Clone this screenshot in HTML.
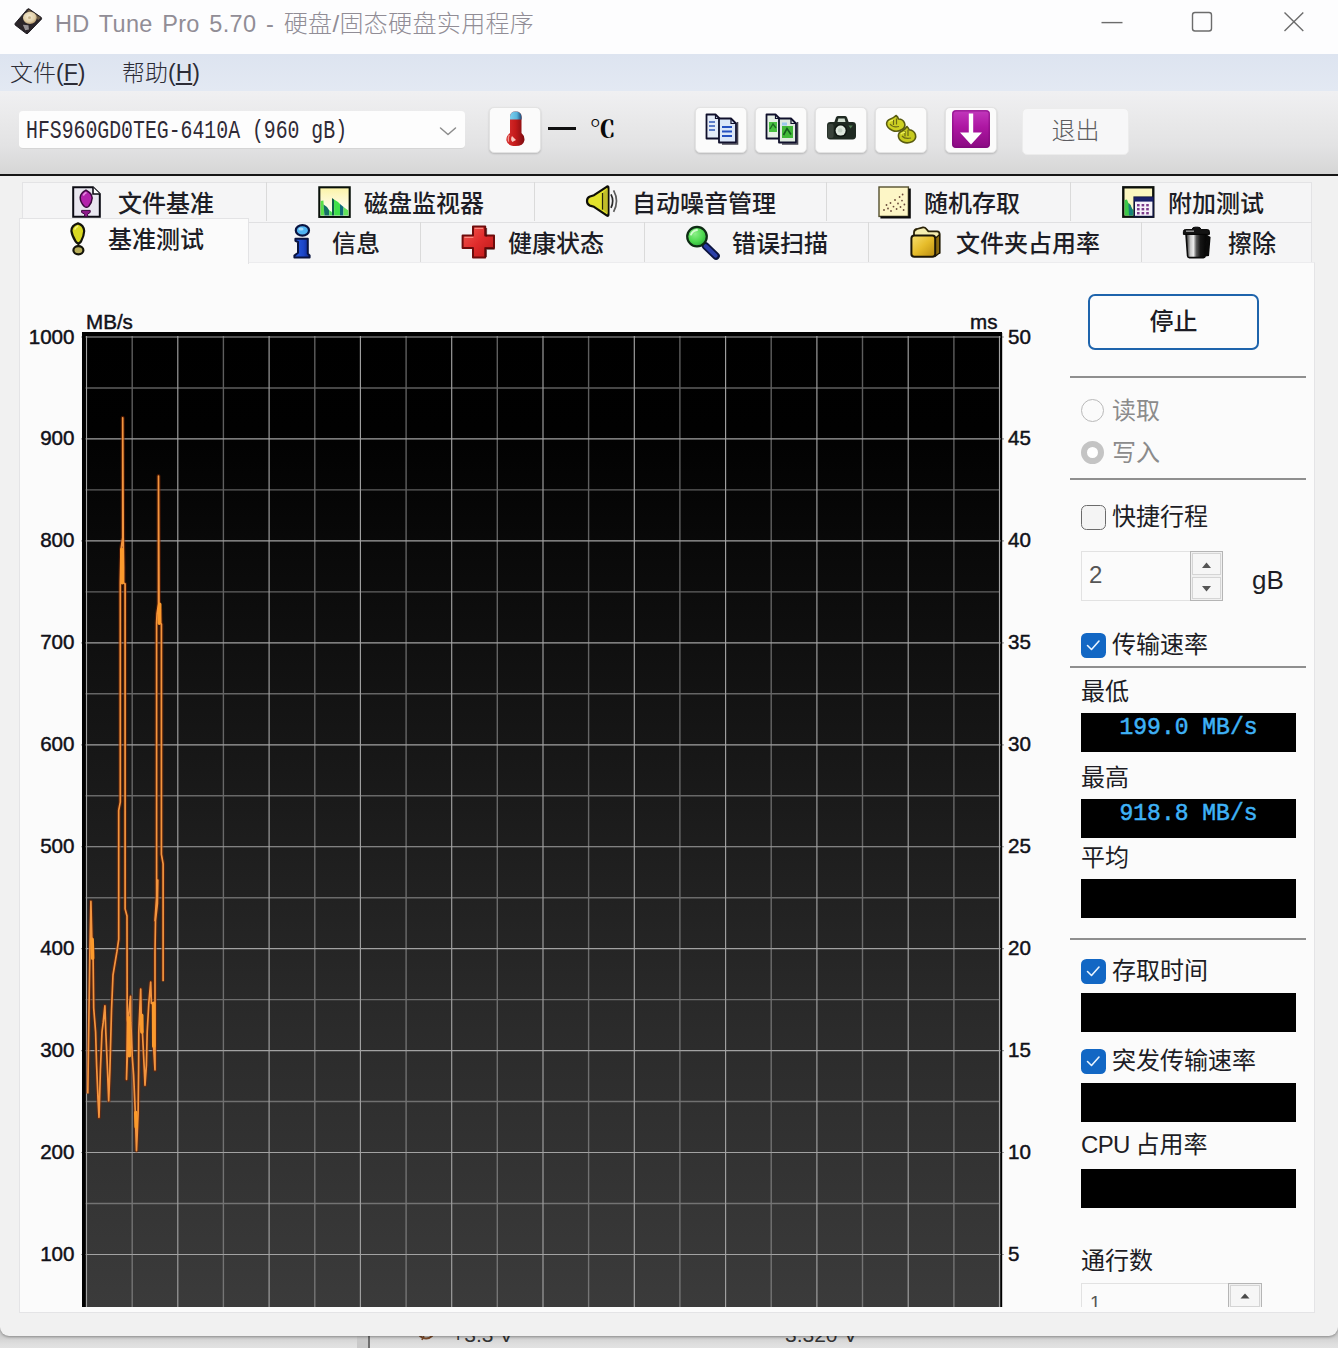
<!DOCTYPE html><html lang="zh-CN"><head><meta charset="utf-8"><title>HD Tune Pro 5.70</title><style>
*{box-sizing:border-box;margin:0;padding:0}
html,body{width:1338px;height:1348px;overflow:hidden;background:#d9d9d9}
body{position:relative;font-family:"Liberation Sans","Noto Sans CJK SC",sans-serif;color:#1b1b1f}
.abs{position:absolute}
#under{left:0;top:1300px;width:1338px;height:48px;background:linear-gradient(#cfcfcf 0,#cfcfcf 36px,#dedede 44px,#e2e2e2)}
#win{left:0;top:0;width:1338px;height:1336px;background:#f1f1f1;border-radius:0 0 9px 9px;overflow:hidden;box-shadow:0 1px 3px rgba(0,0,0,.35)}
#title{left:0;top:0;width:1338px;height:54px;background:#fdfdfe}
#title .t{left:55px;top:7.5px;font-size:24px;line-height:32px;color:#918d96;white-space:nowrap}
#title .t .l{font-size:23.5px;letter-spacing:.3px;word-spacing:2.8px}
#title .t .c{font-weight:300;letter-spacing:.35px}
#menu{left:0;top:54px;width:1338px;height:37px;background:linear-gradient(#dde4f0,#e3e9f3)}
#menu span{position:absolute;top:2.5px;font-size:23px;line-height:32px;color:#2c2c36;white-space:nowrap;font-weight:300}
#tool{left:0;top:91px;width:1338px;height:83px;background:linear-gradient(#f0f0f2,#e9e9ea 35%,#e3e3e4 65%,#d6d6d6)}
#toolline{left:0;top:174px;width:1338px;height:1.8px;background:#161616}
.tbtn{position:absolute;top:107px;width:52px;height:46px;background:#fbfbfb;border:1px solid #e3e3e3;border-radius:5px;box-shadow:0 1px 2px rgba(0,0,0,.18)}
#combo{left:19px;top:111px;width:446px;height:38px;background:#fdfdfd;border-radius:4px;border-bottom:1px solid #d5d5d5}
#combo .tx{left:7px;top:4.5px;font-family:"Liberation Mono","Noto Sans CJK SC",monospace;font-size:25.5px;line-height:32px;color:#2f2a36;white-space:nowrap;transform:scaleX(.777);transform-origin:0 0}
#exit{left:1022px;top:108px;width:107px;height:47px;background:#f7f7f8;border-radius:5px;border:1px solid #ececec;font-size:24px;line-height:44px;text-align:center;color:#5c5c60;font-weight:300}
.tab{position:absolute;font-size:24px;line-height:30px;font-weight:500;color:#1d1d25;white-space:nowrap}
.sep{position:absolute;width:1px;background:#dadada}
.lbl{position:absolute;font-size:24px;line-height:30px;color:#1d1d25;white-space:nowrap}
.hr{position:absolute;left:1070px;width:236px;height:1.3px;background:#8f8f8f;margin-top:.4px}
.blk{position:absolute;left:1081px;width:215px;height:39px;background:#000}
.blk span{position:absolute;left:0;width:215px;top:0px;text-align:center;font-family:"Liberation Mono",monospace;font-size:23px;line-height:30px;color:#3fb2f6;-webkit-text-stroke:.5px #3fb2f6;white-space:pre}
.cb{position:absolute;left:1080.5px;width:25px;height:25px;border-radius:5.5px;margin-top:-.5px}
.cb.on{background:#1267c4}
.cb.off{background:#f4f4f4;border:1.5px solid #6b6b6b}
.ax{position:absolute;font-size:20.6px;line-height:24px;color:#111118;white-space:nowrap;-webkit-text-stroke:.45px #111118}
</style></head><body>
<div id="under" class="abs"><div class="abs" style="left:357px;top:0;width:12px;height:48px;background:#c9c9c9"></div><div class="abs" style="left:368px;top:0;width:2px;height:48px;background:#6f6f6f"></div><div class="abs" style="left:452px;top:23px;font-size:21px;line-height:24px;color:#333;white-space:nowrap">+3.3 V</div><div class="abs" style="left:785px;top:23px;font-size:21px;line-height:24px;color:#333;white-space:nowrap">3.320 V</div><svg class="abs" style="left:414px;top:24px" width="24" height="24"><circle cx="12" cy="6" r="8.5" fill="none" stroke="#7a4a2a" stroke-width="1.8"/><path d="M8 16 L15 0" stroke="#7a4a2a" stroke-width="1.6"/></svg></div>
<div id="win" class="abs">
<div id="title" class="abs"><div class="t abs"><span class="l">HD Tune Pro 5.70 - </span><span class="c">硬盘/固态硬盘实用程序</span></div></div>
<div id="menu" class="abs"><span style="left:10px">文件(<u>F</u>)</span><span style="left:122px">帮助(<u>H</u>)</span></div>
<div id="tool" class="abs"></div><div id="toolline" class="abs"></div>
<div id="combo" class="abs"><div class="tx abs">HFS960GD0TEG-6410A (960 gB)</div></div>
<div class="tbtn" style="left:489px"></div>
<div class="tbtn" style="left:695px"></div>
<div class="tbtn" style="left:755px"></div>
<div class="tbtn" style="left:815px"></div>
<div class="tbtn" style="left:875px"></div>
<div class="tbtn" style="left:945px"></div>
<div id="exit" class="abs">退出</div>
<div class="abs" style="left:21.5px;top:182px;width:1290px;height:81px;background:#f5f5f6;border:1px solid #e3e3e5"></div>
<div class="abs" style="left:20px;top:221.5px;width:1292px;height:1px;background:#e0e0e2"></div>
<div class="sep" style="left:266px;top:182px;height:39px"></div>
<div class="sep" style="left:534px;top:182px;height:39px"></div>
<div class="sep" style="left:826px;top:182px;height:39px"></div>
<div class="sep" style="left:1070px;top:182px;height:39px"></div>
<div class="sep" style="left:420px;top:222px;height:40px"></div>
<div class="sep" style="left:644px;top:222px;height:40px"></div>
<div class="sep" style="left:868px;top:222px;height:40px"></div>
<div class="sep" style="left:1141px;top:222px;height:40px"></div>
<div class="abs" style="left:19px;top:262px;width:1296px;height:1051px;background:#fbfbfb;border:1px solid #e4e4e6;border-top:1px solid #ececee"></div>
<div class="abs" style="left:19px;top:218px;width:230px;height:46px;background:#fbfbfb;border:1px solid #e3e3e5;border-bottom:none"></div>
<div class="tab" style="left:118px;top:189px">文件基准</div>
<div class="tab" style="left:364px;top:189px">磁盘监视器</div>
<div class="tab" style="left:632px;top:189px">自动噪音管理</div>
<div class="tab" style="left:924px;top:189px">随机存取</div>
<div class="tab" style="left:1168px;top:189px">附加测试</div>
<div class="tab" style="left:108px;top:225px">基准测试</div>
<div class="tab" style="left:332px;top:229px">信息</div>
<div class="tab" style="left:508px;top:229px">健康状态</div>
<div class="tab" style="left:732px;top:229px">错误扫描</div>
<div class="tab" style="left:956px;top:229px">文件夹占用率</div>
<div class="tab" style="left:1228px;top:229px">擦除</div>
<svg class="abs" style="left:0;top:0" width="1338" height="1348" viewBox="0 0 1338 1348">
<defs><linearGradient id="cg" x1="0" y1="0" x2="0" y2="1"><stop offset="0" stop-color="#000"/><stop offset=".1" stop-color="#010101"/><stop offset=".45" stop-color="#181818"/><stop offset=".7" stop-color="#2a2a2a"/><stop offset="1" stop-color="#3b3b3b"/></linearGradient></defs>
<rect x="82" y="332" width="920" height="975" fill="url(#cg)"/>
<path d="M86.5 336 V1307 M177.8 336 V1307 M269.1 336 V1307 M360.4 336 V1307 M451.7 336 V1307 M543.0 336 V1307 M634.3 336 V1307 M725.6 336 V1307 M816.9 336 V1307 M908.2 336 V1307 M999.5 336 V1307 M81 337.0 H1004 M81 438.9 H1004 M81 540.9 H1004 M81 642.8 H1004 M81 744.8 H1004 M81 846.7 H1004 M81 948.6 H1004 M81 1050.6 H1004 M81 1152.5 H1004 M81 1254.5 H1004 " stroke="#a2a2a2" stroke-width="1.15" fill="none"/>
<path d="M132.2 336 V1307 M223.4 336 V1307 M314.8 336 V1307 M406.1 336 V1307 M497.3 336 V1307 M588.6 336 V1307 M679.9 336 V1307 M771.2 336 V1307 M862.5 336 V1307 M953.9 336 V1307 M85 388.0 H1000 M85 489.9 H1000 M85 591.9 H1000 M85 693.8 H1000 M85 795.7 H1000 M85 897.7 H1000 M85 999.6 H1000 M85 1101.5 H1000 M85 1203.5 H1000 " stroke="#9c9c9c" stroke-opacity=".6" stroke-width="1.4" fill="none"/>
<rect x="82" y="333" width="3.6" height="974" fill="#000"/>
<rect x="82" y="332" width="920" height="4" fill="#000"/>
<rect x="1000.6" y="333" width="1.6" height="974" fill="#000"/>
<path d="M87.8 1093.6 L88.5 1043.8 L89.9 951.2 L90.9 901.4 L91.8 937.0 L93.0 951.2 L93.7 1008.2 L95.6 1031.9 L96.6 1065.2 L98.0 1098.4 L99.0 1117.4 L100.4 1069.9 L102.0 1031.9 L103.2 1022.4 L104.9 1005.8 L105.8 1031.9 L107.5 1069.9 L108.7 1100.8 L109.9 1069.9 L111.5 1010.6 L113.0 975.0 L117.0 951.2 L118.7 939.3 L118.7 880.0 L118.7 810.4 L120.3 802.1 L120.3 700.0 L120.3 582.8 L121.0 549.6 L122.7 537.7 L122.7 417.8 L123.2 537.7 L123.6 566.2 L123.6 582.8 L125.1 584.0 L125.1 720.0 L125.1 908.9 L127.0 916.0 L127.2 1020.0 L127.4 1022.4 L127.0 1055.7 L126.5 1079.4 L127.7 1046.2 L128.4 1017.7 L130.5 996.3 L130.8 1022.4 L132.2 1055.7 L133.6 1074.7 L135.3 1112.6 L136.5 1150.6 L138.1 1112.6 L138.6 1069.9 L138.8 1031.9 L140.7 989.2 L141.2 1015.3 L142.4 1031.9 L144.1 1065.2 L145.0 1085.3 L146.4 1065.2 L147.2 1031.9 L148.8 1003.4 L150.7 982.1 L151.4 1003.4 L153.1 1003.4 L153.6 1046.2 L155.0 1069.9 L155.0 951.2 L155.5 920.4 L157.4 903.7 L157.8 880.0 L155.0 920.8 L156.6 904.2 L156.6 700.0 L156.6 623.1 L157.1 613.6 L158.5 604.2 L158.5 476.0 L159.0 604.2 L160.2 608.9 L160.7 623.1 L161.4 624.3 L161.4 720.0 L161.4 854.3 L163.1 863.8 L163.1 981.3" fill="none" stroke="#7a2400" stroke-opacity=".55" stroke-width="4" stroke-linejoin="round"/><path d="M87.8 1093.6 L88.5 1043.8 L89.9 951.2 L90.9 901.4 L91.8 937.0 L93.0 951.2 L93.7 1008.2 L95.6 1031.9 L96.6 1065.2 L98.0 1098.4 L99.0 1117.4 L100.4 1069.9 L102.0 1031.9 L103.2 1022.4 L104.9 1005.8 L105.8 1031.9 L107.5 1069.9 L108.7 1100.8 L109.9 1069.9 L111.5 1010.6 L113.0 975.0 L117.0 951.2 L118.7 939.3 L118.7 880.0 L118.7 810.4 L120.3 802.1 L120.3 700.0 L120.3 582.8 L121.0 549.6 L122.7 537.7 L122.7 417.8 L123.2 537.7 L123.6 566.2 L123.6 582.8 L125.1 584.0 L125.1 720.0 L125.1 908.9 L127.0 916.0 L127.2 1020.0 L127.4 1022.4 L127.0 1055.7 L126.5 1079.4 L127.7 1046.2 L128.4 1017.7 L130.5 996.3 L130.8 1022.4 L132.2 1055.7 L133.6 1074.7 L135.3 1112.6 L136.5 1150.6 L138.1 1112.6 L138.6 1069.9 L138.8 1031.9 L140.7 989.2 L141.2 1015.3 L142.4 1031.9 L144.1 1065.2 L145.0 1085.3 L146.4 1065.2 L147.2 1031.9 L148.8 1003.4 L150.7 982.1 L151.4 1003.4 L153.1 1003.4 L153.6 1046.2 L155.0 1069.9 L155.0 951.2 L155.5 920.4 L157.4 903.7 L157.8 880.0 L155.0 920.8 L156.6 904.2 L156.6 700.0 L156.6 623.1 L157.1 613.6 L158.5 604.2 L158.5 476.0 L159.0 604.2 L160.2 608.9 L160.7 623.1 L161.4 624.3 L161.4 720.0 L161.4 854.3 L163.1 863.8 L163.1 981.3" fill="none" stroke="#f4953e" stroke-width="1.7" stroke-linejoin="round"/><path d="M121.8 549.6 L122.2 582.8 M159.7 604.2 L159.3 623.1 M92.1 939.3 L92.6 958.3 M128.9 1017.7 L129.3 1055.7 M141.7 1015.3 L141.9 1031.9 M153.6 1003.4 L153.8 1046.2 M135.8 1112.6 L136.2 1126.9" fill="none" stroke="#fb9a2c" stroke-width="3.6" stroke-linecap="round"/>
</svg>
<div class="ax" style="left:14.5px;width:60px;text-align:right;top:324.5px">1000</div>
<div class="ax" style="left:14.5px;width:60px;text-align:right;top:426.4px">900</div>
<div class="ax" style="left:14.5px;width:60px;text-align:right;top:528.4px">800</div>
<div class="ax" style="left:14.5px;width:60px;text-align:right;top:630.3px">700</div>
<div class="ax" style="left:14.5px;width:60px;text-align:right;top:732.3px">600</div>
<div class="ax" style="left:14.5px;width:60px;text-align:right;top:834.2px">500</div>
<div class="ax" style="left:14.5px;width:60px;text-align:right;top:936.1px">400</div>
<div class="ax" style="left:14.5px;width:60px;text-align:right;top:1038.1px">300</div>
<div class="ax" style="left:14.5px;width:60px;text-align:right;top:1140.0px">200</div>
<div class="ax" style="left:14.5px;width:60px;text-align:right;top:1242.0px">100</div>
<div class="ax" style="left:1008px;top:324.5px">50</div>
<div class="ax" style="left:1008px;top:426.4px">45</div>
<div class="ax" style="left:1008px;top:528.4px">40</div>
<div class="ax" style="left:1008px;top:630.3px">35</div>
<div class="ax" style="left:1008px;top:732.3px">30</div>
<div class="ax" style="left:1008px;top:834.2px">25</div>
<div class="ax" style="left:1008px;top:936.1px">20</div>
<div class="ax" style="left:1008px;top:1038.1px">15</div>
<div class="ax" style="left:1008px;top:1140.0px">10</div>
<div class="ax" style="left:1008px;top:1242.0px">5</div>
<div class="ax" style="left:86px;top:310px">MB/s</div>
<div class="ax" style="left:970px;top:310px">ms</div>
<div class="abs" style="left:1088px;top:294px;width:171px;height:56px;border:2px solid #1e64ac;border-radius:7px;background:#fcfcfc;font-size:24px;line-height:52px;font-weight:500;text-align:center;color:#1c1c24">停止</div>
<div class="hr" style="top:376px"></div>
<div class="hr" style="top:478px"></div>
<div class="hr" style="top:666px"></div>
<div class="hr" style="top:938px"></div>
<div class="abs" style="left:1081px;top:399px;width:23px;height:23px;border-radius:50%;border:1.5px solid #b9b9b9;background:#fbfbfb"></div>
<div class="lbl" style="left:1112px;top:396px;color:#8b8b8b">读取</div>
<div class="abs" style="left:1081px;top:441px;width:23px;height:23px;border-radius:50%;border:6.5px solid #c4c4c4;background:#fff"></div>
<div class="lbl" style="left:1112px;top:438px;color:#8b8b8b">写入</div>
<div class="cb off" style="top:505px"></div><div class="lbl" style="left:1112px;top:502px">快捷行程</div>
<div class="abs" style="left:1081px;top:551px;width:142px;height:50px;background:#fbfbfb;border:1px solid #e2e2e2"></div>
<div class="abs" style="left:1089px;top:560px;font-size:24px;line-height:30px;color:#555">2</div>
<div class="abs" style="left:1190px;top:551px;width:33px;height:50px;border:1px solid #b5b5b5;background:#f0f0f0"></div>
<div class="abs" style="left:1192px;top:553px;width:29px;height:22px;border:1px solid #d5d5d5;background:#f6f6f6"></div>
<div class="abs" style="left:1192px;top:577px;width:29px;height:22px;border:1px solid #d5d5d5;background:#f6f6f6"></div>
<svg class="abs" style="left:1190px;top:551px" width="33" height="50"><path d="M12 17 L16.5 11.5 L21 17Z M12 35 L16.5 40.5 L21 35Z" fill="#555"/></svg>
<div class="lbl" style="left:1252px;top:565px;font-size:26px">gB</div>
<div class="cb on" style="top:633px"></div><svg class="abs" style="left:1081px;top:633px" width="24" height="24"><path d="M6.5 12.5 L10.5 16.5 L18 8" stroke="#eaf5ff" stroke-width="1.6" fill="none" stroke-linecap="round" stroke-linejoin="round"/></svg><div class="lbl" style="left:1112px;top:630px">传输速率</div>
<div class="lbl" style="left:1081px;top:677px">最低</div>
<div class="blk" style="top:713px"><span>199.0 MB/s</span></div>
<div class="lbl" style="left:1081px;top:763px">最高</div>
<div class="blk" style="top:799px"><span>918.8 MB/s</span></div>
<div class="lbl" style="left:1081px;top:843px">平均</div>
<div class="blk" style="top:879px"></div>
<div class="cb on" style="top:959px"></div><svg class="abs" style="left:1081px;top:959px" width="24" height="24"><path d="M6.5 12.5 L10.5 16.5 L18 8" stroke="#eaf5ff" stroke-width="1.6" fill="none" stroke-linecap="round" stroke-linejoin="round"/></svg><div class="lbl" style="left:1112px;top:956px">存取时间</div>
<div class="blk" style="top:993px"></div>
<div class="cb on" style="top:1049px"></div><svg class="abs" style="left:1081px;top:1049px" width="24" height="24"><path d="M6.5 12.5 L10.5 16.5 L18 8" stroke="#eaf5ff" stroke-width="1.6" fill="none" stroke-linecap="round" stroke-linejoin="round"/></svg><div class="lbl" style="left:1112px;top:1046px">突发传输速率</div>
<div class="blk" style="top:1083px"></div>
<div class="lbl" style="left:1081px;top:1130px"><span style="letter-spacing:-.7px">CPU </span>占用率</div>
<div class="blk" style="top:1169px"></div>
<div class="lbl" style="left:1081px;top:1246px">通行数</div>
<div class="abs" style="left:1081px;top:1282.5px;width:181px;height:24px;overflow:hidden"><div class="abs" style="left:0;top:0;width:181px;height:50px;background:#fbfbfb;border:1px solid #e2e2e2"></div><div class="abs" style="left:147px;top:0;width:34px;height:50px;border:1px solid #b5b5b5;background:#f0f0f0"></div><div class="abs" style="left:149px;top:2px;width:30px;height:22px;border:1px solid #d5d5d5;background:#f6f6f6"></div><svg class="abs" style="left:147px;top:0" width="34" height="28"><path d="M12.5 15.5 L17 10.5 L21.5 15.5Z" fill="#4a4a4a"/></svg><div class="abs" style="left:9px;top:8px;font-size:19px;line-height:24px;color:#555">1</div></div>
<svg class="abs" style="left:12.5px;top:6.5px" width="30" height="28" viewBox="0 0 32 30"><defs><radialGradient id="pl" cx=".45" cy=".4" r=".6"><stop offset="0" stop-color="#f6ecd4"/><stop offset=".7" stop-color="#e2d0a8"/><stop offset="1" stop-color="#b89c70"/></radialGradient></defs><path d="M17 2 L30 11 Q31 12 30.3 13.2 L16 28 Q15 29 13.8 28.2 L2.5 19.5 Q1.5 18.5 2.4 17.4 L15.4 2.3 Q16.2 1.5 17 2Z" fill="#2b2529" stroke="#18141a" stroke-width="1"/><path d="M17 2.6 L29.6 11.4 L27 14 L15 4.6Z" fill="#6a5a44"/><ellipse cx="18" cy="11.6" rx="7.4" ry="6.6" fill="url(#pl)"/><ellipse cx="17.6" cy="11.4" rx="1.6" ry="1.4" fill="#c8b48c"/><path d="M10.5 19 L16.5 19.5 L17 24 L13 25 Z" fill="#a9a4a8" opacity=".85"/></svg>
<svg class="abs" style="left:504px;top:109px" width="23" height="39" viewBox="0 0 23 39" ><defs><linearGradient id="tr" x1="0" x2="1"><stop offset="0" stop-color="#d83030"/><stop offset=".5" stop-color="#c41a1a"/><stop offset="1" stop-color="#7c0c10"/></linearGradient><linearGradient id="tb" x1="0" x2="1"><stop offset="0" stop-color="#7fd0ee"/><stop offset=".6" stop-color="#58b4dc"/><stop offset="1" stop-color="#1e4a78"/></linearGradient></defs><path d="M6 8 Q6 2.5 11.5 2.5 Q17.5 2.5 17.5 8 L17.5 24 Q21 27 20.4 31.5 Q19.4 37 11.5 37 Q3.4 37 2.4 31.4 Q2 27 6 24Z" fill="url(#tr)"/><path d="M6 8 Q6 2.5 11.5 2.5 Q17.5 2.5 17.5 8 L17.5 10.6 L6 10.6Z" fill="url(#tb)"/><path d="M8 27 L12 31 L8.4 33 Q6 30.5 8 27Z" fill="#ffd9d0" opacity=".9"/><path d="M5.2 26 Q3.6 29 4.6 32.6" stroke="#f4b0a8" stroke-width="1.3" fill="none" opacity=".8"/></svg>
<svg class="abs" style="left:704.5px;top:112.5px" width="34" height="33" viewBox="0 0 34 33" ><path d="M1.5 1.5 H10.5 L14.5 5.5 V25.5 H1.5Z" fill="#e4ecf8" stroke="#10102c" stroke-width="1.8" stroke-linejoin="round"/><path d="M10.5 1.5 V5.5 H14.5" fill="none" stroke="#10102c" stroke-width="1.2"/><path d="M4 9 H10 M4 13 H10 M4 17 H10" stroke="#3058b8" stroke-width="1.6"/><path d="M17 31 H32.5 V9" stroke="#0a0a18" stroke-width="1.6" fill="none" opacity=".75"/><path d="M14 5.5 H26 L31 10.5 V29.5 H14Z" fill="#dbe7f8" stroke="#10102c" stroke-width="1.8" stroke-linejoin="round"/><path d="M26 5.5 V10.5 H31" fill="none" stroke="#10102c" stroke-width="1.2"/><path d="M17 14 H27 M17 18.5 H27 M17 23 H27" stroke="#2450c0" stroke-width="1.9"/></svg>
<svg class="abs" style="left:764.5px;top:112.5px" width="34" height="33" viewBox="0 0 34 33" ><path d="M1.5 1.5 H10.5 L14.5 5.5 V25.5 H1.5Z" fill="#e6f0e6" stroke="#10102c" stroke-width="1.8" stroke-linejoin="round"/><path d="M10.5 1.5 V5.5 H14.5" fill="none" stroke="#10102c" stroke-width="1.2"/><rect x="4" y="9" width="8" height="10" fill="#48c040"/><path d="M5 16 L8 11 L11 15" stroke="#1c6a20" stroke-width="1.4" fill="none"/><path d="M17 31 H32.5 V9" stroke="#0a0a18" stroke-width="1.6" fill="none" opacity=".75"/><path d="M14 5.5 H26 L31 10.5 V29.5 H14Z" fill="#dfeadf" stroke="#10102c" stroke-width="1.8" stroke-linejoin="round"/><path d="M26 5.5 V10.5 H31" fill="none" stroke="#10102c" stroke-width="1.2"/><rect x="17" y="13" width="11" height="12" fill="#40b838"/><path d="M18.5 22 L22 15.5 L26 21.5" stroke="#145c1c" stroke-width="1.6" fill="none"/><rect x="17" y="9.5" width="5" height="3" fill="#9cc8ec"/></svg>
<svg class="abs" style="left:825.5px;top:115px" width="31" height="26" viewBox="0 0 31 26" ><path d="M8 8 L10 2.4 Q10.6 1 12.2 1 H18.8 Q20.4 1 21 2.4 L23 8Z" fill="#1f2a22"/><path d="M11.4 7.4 L12.4 3.4 H18.6 L19.6 7.4Z" fill="#cfdccf"/><rect x="1" y="7" width="29" height="17.5" rx="3.4" fill="#1f2a22"/><rect x="1.6" y="9" width="6" height="14" rx="2" fill="#38423a"/><circle cx="14.6" cy="15.6" r="6.6" fill="#0f1712"/><circle cx="14.6" cy="15.6" r="5" fill="#dfe9df"/><circle cx="14.2" cy="15.4" r="2.2" fill="#c4d2c6"/><path d="M22.5 10.5 L26.8 10.5 L24.6 13.6Z" fill="#4f7a52"/></svg>
<svg class="abs" style="left:885px;top:113.5px" width="33" height="31" viewBox="0 0 33 31" ><g stroke="#5a5c10" stroke-width="1.6" stroke-linejoin="round"><path d="M11 1.5 Q13 3 13.5 5 Q18 5 19.5 9 Q21 13 17 15.5 Q12 18.5 7.5 16.5 Q2 14 1.6 10 Q1.5 6.5 5.5 5 Q8.5 4 11 1.5Z" fill="#cdd022"/><path d="M22 12.5 Q23.5 14 24.2 15.8 Q29 16.5 30.4 20.5 Q31.6 25 27.5 27.5 Q22.5 30 18 28 Q13.6 26 13.4 22 Q13.2 18.5 17 17 Q20 15.5 22 12.5Z" fill="#c6ca1e"/></g><path d="M8.5 6 V11 M11.5 4.5 V10.5 M5 10 Q8 14 14 12.5" stroke="#6a6a18" stroke-width="1.2" fill="none"/><path d="M20 17 V22.5 M23 15.8 V22 M17 22 Q20 25.5 26 24" stroke="#6a6a18" stroke-width="1.2" fill="none"/><path d="M4 8 Q6 6 8 6.4 M16 20 Q18 18 20 18.4" stroke="#eef060" stroke-width="1.3" fill="none"/></svg>
<svg class="abs" style="left:952px;top:110px" width="38" height="38" viewBox="0 0 38 38" ><defs><linearGradient id="pg" x1="0" y1="0" x2="0" y2="1"><stop offset="0" stop-color="#c338bd"/><stop offset=".45" stop-color="#ad16a2"/><stop offset="1" stop-color="#8a0a82"/></linearGradient></defs><rect x="0" y="0" width="38" height="38" rx="4" fill="url(#pg)"/><rect x=".8" y=".8" width="36.4" height="36.4" rx="3.4" fill="none" stroke="#7c0a78" stroke-width="1.2" opacity=".6"/><path d="M16.8 3.5 H21.2 V22.5 H30 L19 34.5 L8 22.5 H16.8Z" fill="#fff"/></svg>
<svg class="abs" style="left:72px;top:186px" width="29" height="32" viewBox="0 0 29 32" ><path d="M1.2 1.2 H21 L27.8 8 V30.8 H1.2Z" fill="#e9e7f0" stroke="#0c0c14" stroke-width="2" stroke-linejoin="miter"/><path d="M21 1.2 V8 H27.8" fill="#fff" stroke="#0c0c14" stroke-width="1.6"/><path d="M14 4.2 Q19.8 7 20.2 12 Q20 16.5 16.6 20.5 Q14.5 22 12.4 20.5 Q8.2 16 8.2 11.4 Q8.6 7 14 4.2Z" fill="#b323ab" stroke="#3c0a3e" stroke-width="1.5"/><path d="M11.6 9 Q12.4 7.6 14 6.8" stroke="#e58ae0" stroke-width="1.6" fill="none" stroke-linecap="round"/><path d="M9.6 24.4 H18.2 V26.4 L15.6 28.2 V30.6 H12.6 V28.2 L9.6 26.4Z" fill="#8e1a8a" stroke="#3c0a3e" stroke-width="1"/></svg>
<svg class="abs" style="left:69.5px;top:221.5px" width="16" height="34" viewBox="0 0 16 34" ><path d="M8 1.4 Q13.6 3 14.2 9 Q14 14 11 19.5 Q9.6 21.4 8.4 21.4 Q6.6 21.2 5.6 19.4 Q2 13.5 1.4 9 Q1.4 3.4 8 1.4Z" fill="#d9d822" stroke="#14140a" stroke-width="2.2" stroke-linejoin="round"/><path d="M5 7 Q5.6 5 7.4 4.4" stroke="#f4f480" stroke-width="1.6" fill="none" stroke-linecap="round"/><path d="M8.4 21 V24" stroke="#14140a" stroke-width="2"/><ellipse cx="8.4" cy="28.2" rx="5" ry="4.1" fill="#b8ae58" stroke="#14140a" stroke-width="2.2"/></svg>
<svg class="abs" style="left:318px;top:186px" width="33" height="33" viewBox="0 0 33 33" ><defs><linearGradient id="my" x1="0" y1="0" x2="0" y2="1"><stop offset="0" stop-color="#fbf3a6"/><stop offset=".6" stop-color="#fefbe2"/><stop offset="1" stop-color="#ffffff"/></linearGradient></defs><rect x="1.3" y="1.3" width="30.4" height="29.6" fill="url(#my)" stroke="#08100a" stroke-width="2.1"/><path d="M2.6 15 L5.4 14.5 L6.4 29.6 H2.6Z" fill="#58e048"/><path d="M5.6 18.5 L9 21 L11 24 L11.4 29.6 H6.4Z" fill="#147064"/><path d="M11 24 L13.8 26 L14 29.6 H11.4Z" fill="#48e050"/><path d="M14 12 L16 13.4 L16.2 29.6 H14Z" fill="#0f5c4a"/><path d="M16 13.6 L20 16 L22 18 L22 29.6 H16.2Z" fill="#3ee04a"/><path d="M22 18 L25.6 21 L25.4 29.6 H22Z" fill="#106c7a"/><path d="M25.6 21 L30.4 24.5 V29.6 H25.4Z" fill="#62e45a"/></svg>
<svg class="abs" style="left:585px;top:185px" width="35" height="33" viewBox="0 0 35 33" ><path d="M2 16 Q2 12.5 5 11.5 L9 10.2 L22 1.6 Q23.4 1 23.4 3 V29.4 Q23.4 31.4 22 30.6 L9 21.8 L5 20.6 Q2 19.6 2 16Z" fill="#e2e22c" stroke="#0e0e08" stroke-width="2.2" stroke-linejoin="round"/><path d="M17.6 8 V24.6" stroke="#0e0e08" stroke-width="1.4"/><path d="M17.8 8 L23 3 V29 L17.8 24.4Z" fill="#b4b028" opacity=".75"/><path d="M26 9.4 Q29.4 16 26 22.8" stroke="#2a2a2a" stroke-width="1.7" fill="none"/><path d="M28.6 5.4 Q34.4 16 28.6 26.8" stroke="#5c5c5c" stroke-width="1.7" fill="none"/></svg>
<svg class="abs" style="left:878px;top:186px" width="33" height="33" viewBox="0 0 33 33" ><rect x="1" y="1" width="29.4" height="29.4" fill="#fdf6c6" stroke="#54502e" stroke-width="1.4"/><path d="M2.4 31.4 H31.6 V2.4" stroke="#0c0c0c" stroke-width="2.4" fill="none"/><g fill="#6b4a3a"><circle cx="6" cy="24" r=".9"/><circle cx="8.5" cy="19" r=".9"/><circle cx="10" cy="22.5" r=".9"/><circle cx="12.5" cy="17" r=".9"/><circle cx="13" cy="25" r=".9"/><circle cx="15.5" cy="20.6" r=".9"/><circle cx="17" cy="14" r=".9"/><circle cx="18.6" cy="23" r=".9"/><circle cx="20" cy="17.5" r=".9"/><circle cx="21.6" cy="11" r=".9"/><circle cx="22.5" cy="21" r=".9"/><circle cx="24" cy="14.6" r=".9"/><circle cx="24.6" cy="8.5" r=".9"/><circle cx="25.6" cy="24" r=".9"/><circle cx="26.4" cy="18.5" r=".9"/></g></svg>
<svg class="abs" style="left:1122px;top:186px" width="33" height="33" viewBox="0 0 33 33" ><rect x="1.3" y="1.3" width="30" height="29.4" fill="#fbf6c0" stroke="#0c100c" stroke-width="2.4"/><path d="M2.6 14 L5 13.4 L6.4 17 L8 18 L9.4 22 L11.6 24 V29.6 H2.6Z" fill="#3cc848"/><path d="M6.4 17.4 L8.6 19 L10.8 24.6 V29.6 H7Z" fill="#16807a"/><rect x="12.2" y="11.2" width="19" height="19.4" fill="#f6f2fa" stroke="#10143c" stroke-width="1.6"/><rect x="12.2" y="11.2" width="19" height="4.4" fill="#1a206a"/><g fill="#7a3a8a"><rect x="15" y="18" width="2.6" height="2.4"/><rect x="19.6" y="18" width="2.6" height="2.4"/><rect x="24.2" y="18" width="2.6" height="2.4"/><rect x="15" y="22" width="2.6" height="2.4"/><rect x="19.6" y="22" width="2.6" height="2.4"/><rect x="24.2" y="22" width="2.6" height="2.4"/><rect x="15" y="26" width="2.6" height="2.4"/><rect x="19.6" y="26" width="2.6" height="2.4"/><rect x="24.2" y="26" width="2.6" height="2.4"/></g></svg>
<svg class="abs" style="left:292px;top:224px" width="20" height="36" viewBox="0 0 20 36" ><defs><linearGradient id="ib" x1="0" x2="1"><stop offset="0" stop-color="#2a5ce0"/><stop offset=".6" stop-color="#1c46c8"/><stop offset="1" stop-color="#10268c"/></linearGradient></defs><ellipse cx="10.4" cy="6.4" rx="6.6" ry="5.2" fill="#52b4f2" stroke="#0a1440" stroke-width="2.2"/><ellipse cx="9" cy="5" rx="2.6" ry="1.6" fill="#a6dcfa"/><path d="M3.4 14.8 H15.8 V29.6 L17.6 31.4 V33.4 H2.4 V31.6 L6 28.8 V18 L3.4 16.8Z" fill="url(#ib)" stroke="#0a1440" stroke-width="2" stroke-linejoin="round"/></svg>
<svg class="abs" style="left:460.5px;top:225px" width="35" height="35" viewBox="0 0 35 35" ><defs><linearGradient id="cr" x1="0" y1="0" x2="1" y2="1"><stop offset="0" stop-color="#f05a50"/><stop offset=".5" stop-color="#e02c2c"/><stop offset="1" stop-color="#b81818"/></linearGradient></defs><path d="M12 1.6 H24.2 V10.6 H33 V23 H24.2 V32.4 H12 V23 H1.6 V10.6 H12Z" fill="url(#cr)" stroke="#6e0c0c" stroke-width="2" stroke-linejoin="round"/><path d="M13.6 3.4 H22 M3.4 12.4 H12.4" stroke="#ff9a90" stroke-width="1.4" opacity=".8"/><path d="M25.4 11.4 V3 M25.2 32 V24 H33.6" stroke="#3a0606" stroke-width="1.4" fill="none" opacity=".7"/></svg>
<svg class="abs" style="left:685px;top:224.5px" width="36" height="36" viewBox="0 0 36 36" ><defs><radialGradient id="mg" cx=".4" cy=".35" r=".7"><stop offset="0" stop-color="#8cf088"/><stop offset=".6" stop-color="#4cd84e"/><stop offset="1" stop-color="#2aa838"/></radialGradient></defs><path d="M20.6 21 L31 31" stroke="#0c1440" stroke-width="7.6" stroke-linecap="round"/><path d="M20.6 21 L30.6 30.6" stroke="#2a3ea8" stroke-width="4" stroke-linecap="round"/><circle cx="12" cy="11.6" r="9.8" fill="url(#mg)" stroke="#0e2c14" stroke-width="2.2"/><path d="M6 9.6 Q7.6 5.6 12 5" stroke="#d4fcd0" stroke-width="1.8" fill="none" stroke-linecap="round"/></svg>
<svg class="abs" style="left:910px;top:226px" width="32" height="33" viewBox="0 0 32 33" ><defs><linearGradient id="fg" x1="0" y1="0" x2="1" y2="1"><stop offset="0" stop-color="#f8e070"/><stop offset=".5" stop-color="#e6bc2a"/><stop offset="1" stop-color="#b88a10"/></linearGradient></defs><path d="M4 6.6 Q4 3.6 7 3 L13 1.4 Q15 1.2 16.4 3 L18.4 5.4 H27 Q29.6 5.6 29.6 8.4 V27 H4Z" fill="#f6eeb0" stroke="#2a2208" stroke-width="1.8" stroke-linejoin="round"/><path d="M1.4 12.4 Q1.4 9.6 4.4 9.6 H22.4 Q25.2 9.6 25.2 12.4 V28 Q25.2 30.8 22.4 30.8 H4.4 Q1.4 30.8 1.4 28Z" fill="url(#fg)" stroke="#1c1606" stroke-width="2"/><path d="M25.6 12 L29.6 8.6 V27 L25.6 30Z" fill="#8a6a10" stroke="#1c1606" stroke-width="1.2"/></svg>
<svg class="abs" style="left:1181.5px;top:226px" width="30" height="33" viewBox="0 0 30 33" ><defs><linearGradient id="tg" x1="0" x2="1"><stop offset="0" stop-color="#1a1a1a"/><stop offset=".22" stop-color="#c8c8c8"/><stop offset=".36" stop-color="#ededed"/><stop offset=".5" stop-color="#5c5c5c"/><stop offset=".7" stop-color="#161616"/><stop offset="1" stop-color="#050505"/></linearGradient></defs><path d="M4 8 H24.6 L23.2 30 Q23 31.6 21.4 31.6 H7.4 Q5.8 31.6 5.6 30Z" fill="url(#tg)" stroke="#0a0a0a" stroke-width="1.6"/><path d="M1.4 5.6 Q1.4 3.6 3.4 3.6 H10 Q10.4 1.2 13 1.2 H16 Q18.6 1.2 19 3.6 H25.4 Q27.4 3.6 27.4 5.6 V8.4 H1.4Z" fill="#141414" stroke="#050505" stroke-width="1"/><path d="M4 5.2 H12" stroke="#9a9a9a" stroke-width="1.4"/><path d="M24.6 8.6 L28.6 11 L27 30 L23.2 30.6Z" fill="#0a0a0a"/></svg>
<svg class="abs" style="left:1090px;top:0" width="248" height="54"><g stroke="#6c6c6c" stroke-width="1.4" fill="none"><path d="M11.5 22.6 H32.5"/><rect x="102.5" y="12.5" width="19" height="18.5" rx="2.5"/><path d="M194.5 12.5 L213.3 31 M213.3 12.5 L194.5 31"/></g></svg>
<svg class="abs" style="left:436px;top:122px" width="24" height="18"><path d="M4.5 6 L12 12.5 L19.5 6" stroke="#8c8c8c" stroke-width="1.5" fill="none" stroke-linecap="round" stroke-linejoin="round"/></svg>
<div class="abs" style="left:548px;top:127px;width:28px;height:3px;background:#101010"></div>
<div class="abs" style="left:589.5px;top:112px;font-family:'Liberation Serif','Noto Serif CJK SC',serif;font-weight:900;font-size:23px;line-height:36px;color:#0a0a0a;white-space:nowrap;transform:scaleX(1.1);transform-origin:0 50%">℃</div>
</div>
</body></html>
